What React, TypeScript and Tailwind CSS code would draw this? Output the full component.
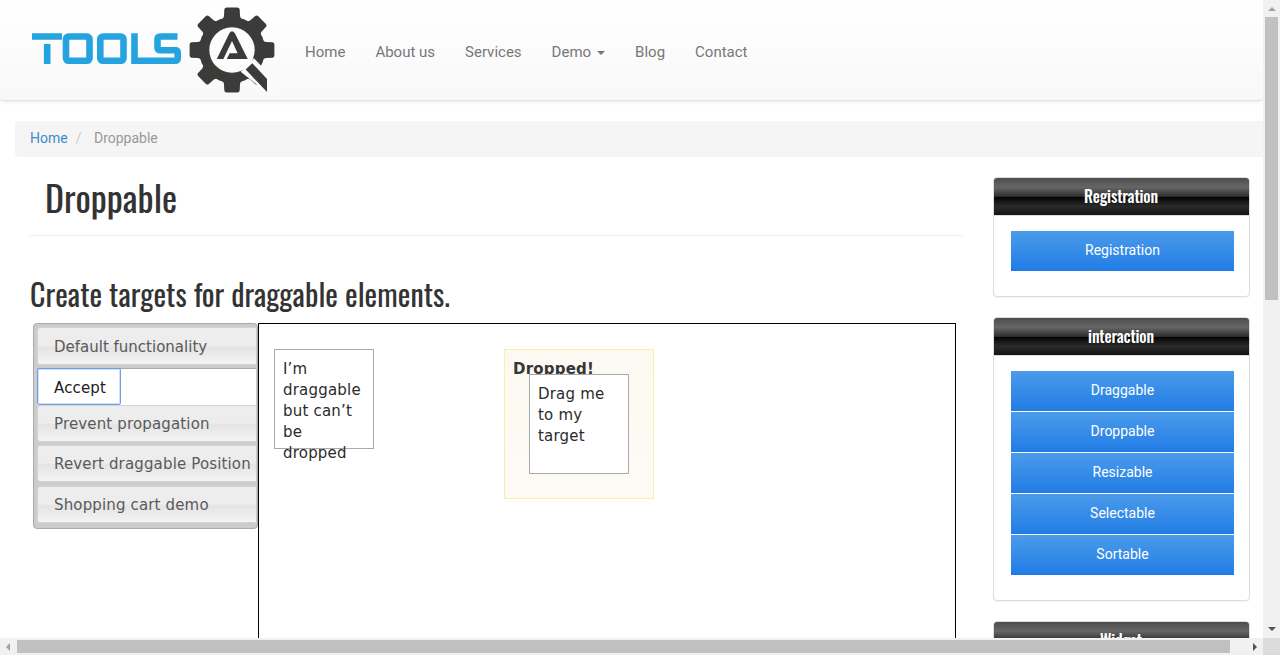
import type { ReactNode } from 'react';

const panelHead =
  "flex h-[37px] justify-center bg-[linear-gradient(to_bottom,#4c4c4c_0%,#595959_12%,#666666_25%,#474747_39%,#2c2c2c_50%,#000000_51%,#111111_60%,#2b2b2b_76%,#1c1c1c_91%,#131313_100%)] pt-2 pr-px font-['Oswald','Roboto',sans-serif] text-base leading-5 font-medium tracking-[-0.15px] text-white";

function Logo() {
  return (
    <svg width="250" height="92" viewBox="28 4 250 92" className="block shrink-0" aria-label="Tools QA">
      <g fill="none" stroke="#25a3df" strokeWidth="6.6">
        <path d="M32 36.5H62M47.2 44V64" />
        <rect x="66" y="36.5" width="23.5" height="24.3" rx="2.5" />
        <rect x="100.3" y="36.5" width="23.2" height="24.3" rx="2.5" />
        <path d="M134.5 33.2V60.8H175Q177.7 60.8 177.7 58V52.5Q177.7 50.3 175.5 50.3H160.5Q157.5 50.3 157.5 47.5V39.5Q157.5 36.5 160.5 36.5H177.5" />
      </g>
      <g fill="#3b3b3a">
        <circle cx="232" cy="50" r="33" />
        {[0, 45, 90, 135, 180, 225, 270, 315].map((a) => (
          <path
            key={a}
            d="M218 24L221.5 19.5Q223.8 18.5 224 16L224.3 9.5Q224.5 7.6 226.8 7.6H237.2Q239.5 7.6 239.7 9.5L240 16Q240.2 18.5 242.5 19.5L246 24Z"
            transform={`rotate(${a} 232 50)`}
          />
        ))}
      </g>
      <circle cx="232" cy="50" r="22.7" fill="#fcfcfc" />
      <path d="M240.7 71.7L254 58.3L280 86V103Z" fill="#fafafa" />
      <path d="M245.7 69.5L252.3 63.2L267 79V92Z" fill="#3b3b3a" />
      <path d="M216.8 59L229.2 33.5Q232 29 235 33.5L247.7 59H226.8L229.7 53.2H237.6L232 41L223.4 59Z" fill="#3b3b3a" />
    </svg>
  );
}

function Panel({ title, children }: { title: string; children?: ReactNode }) {
  return (
    <section className="mb-5 overflow-hidden rounded border border-[#ddd] bg-white shadow-[0_1px_1px_rgba(0,0,0,0.05)]">
      <h3 className={panelHead}>{title}</h3>
      <ul className="border-t border-[#ddd] pt-[15px] pr-[15px] pb-[25px] pl-[17px] text-center text-sm text-white">
        {children}
      </ul>
    </section>
  );
}

function LinkButton({ children }: { children: ReactNode }) {
  return (
    <li className="mb-px h-10 bg-linear-to-b from-[#4a9bea] to-[#207ce5] leading-[39px] last:mb-0">{children}</li>
  );
}

function Tab({ children }: { children: ReactNode }) {
  return (
    <li className="h-[37px] rounded-l-[3px] border border-r-0 border-[#d3d3d3] bg-[linear-gradient(to_bottom,#ededed_0%,#ededed_48%,#e4e4e4_54%,#f4f4f4_100%)] pl-4 leading-[37px] whitespace-nowrap">
      {children}
    </li>
  );
}

export default function App() {
  return (
    <div className="flex h-[655px] w-[1280px] flex-col overflow-hidden bg-white font-['Roboto',sans-serif] text-[#333]">
      <div className="flex h-[638px]">
        <div className="h-[638px] w-[1263px] overflow-hidden">
          <nav className="flex h-[101px] items-start rounded-b border-b border-[#e1e1e1] bg-linear-to-b from-white to-[#f8f8f8] pt-1 pl-7 shadow-[0_1px_4px_rgba(0,0,0,0.09)]">
            <Logo />
            <ul className="flex items-center gap-[30px] pt-[38px] pl-[27px] text-[15px] leading-[21px] text-[#777]">
              <li>Home</li>
              <li>About us</li>
              <li>Services</li>
              <li className="flex items-center gap-1.5">
                Demo
                <span className="border-x-4 border-t-4 border-x-transparent border-t-[#777]" />
              </li>
              <li>Blog</li>
              <li>Contact</li>
            </ul>
          </nav>
          <div className="mt-5 ml-[15px] flex h-9 rounded-l bg-[#f5f5f5] pl-[15px] text-sm leading-[35px]">
            <span className="text-[#428bca]">Home</span>
            <span className="ml-2 text-[#ccc]">/</span>
            <span className="ml-[12.5px] text-[#999]">Droppable</span>
          </div>
          <div className="flex pl-[30px]">
            <main className="w-[933px]">
              <div className="h-[79px] border-b border-[#eee] pt-5 pl-[15px]">
                <h1 className="font-['Oswald','Roboto',sans-serif] text-[36px] leading-10 font-normal whitespace-nowrap">
                  Droppable
                </h1>
              </div>
              <h2 className="h-[87px] pt-[41px] font-['Oswald','Roboto',sans-serif] text-[30px] leading-[33px] font-normal tracking-[0.07px] whitespace-nowrap">
                Create targets for draggable elements.
              </h2>
              <div className="flex pl-[3px] font-['DejaVu_Sans',sans-serif] text-[15px] tracking-[0.2px]">
                <ul className="flex h-[206px] w-[225px] flex-col rounded border border-[#aaa] bg-[#ccc] pt-[3px] pr-px pl-[3px] tracking-[0.15px] text-[#5a5a5a]">
                  <li className="h-[38px] rounded-l-[3px] border border-r-0 border-[#d3d3d3] bg-[linear-gradient(to_bottom,#ededed_0%,#ededed_48%,#e4e4e4_54%,#f4f4f4_100%)] pl-4 leading-[38px] tracking-normal whitespace-nowrap">
                    Default functionality
                  </li>
                  <li className="mt-[3px] flex h-[37px] border-t border-[#aaa] bg-white text-[#212121]">
                    <span className="-mt-px h-[37px] w-[84px] rounded-xs border border-[#6f9fee] pl-4 leading-[38px] ring-1 ring-[#cfdffa] ring-inset">
                      Accept
                    </span>
                  </li>
                  <Tab>Prevent propagation</Tab>
                  <li className="h-[3px]" />
                  <Tab>Revert draggable Position</Tab>
                  <li className="h-1" />
                  <Tab>Shopping cart demo</Tab>
                </ul>
                <div className="flex h-[400px] w-[698px] items-start border border-black pt-[25px] pl-[15px] leading-[21px] text-[#2b2b2b]">
                  <div className="h-[100px] w-[100px] border border-[#aaa] bg-white px-2 pt-[9px]">
                    I’m draggable but can’t be dropped
                  </div>
                  <div className="relative ml-[130px] h-[150px] w-[150px] border border-[#fcefa1] bg-[linear-gradient(to_bottom,#fbf9f2_0%,#fcfaf1_50%,#fdfaf5_55%,#fefaf5_100%)] px-2 pt-[9px]">
                    <b className="text-[#363636]">Dropped!</b>
                    <div className="absolute top-6 left-6 h-[100px] w-[100px] border border-[#aaa] bg-white px-2 pt-[9px]">
                      Drag me to my target
                    </div>
                  </div>
                </div>
              </div>
            </main>
            <aside className="ml-[30px] w-[257px] pt-5">
              <Panel title="Registration">
                <LinkButton>Registration</LinkButton>
              </Panel>
              <Panel title="interaction">
                <LinkButton>Draggable</LinkButton>
                <LinkButton>Droppable</LinkButton>
                <LinkButton>Resizable</LinkButton>
                <LinkButton>Selectable</LinkButton>
                <LinkButton>Sortable</LinkButton>
              </Panel>
              <Panel title="Widget" />
            </aside>
          </div>
        </div>
        <div className="flex w-[17px] flex-col items-center bg-[#f1f1f1]">
          <span className="mt-[7px] border-x-4 border-b-4 border-x-transparent border-b-[#a3a3a3]" />
          <span className="mt-1.5 h-[283px] w-[13px] bg-[#c1c1c1]" />
          <span className="mt-auto mb-[7px] border-x-4 border-t-4 border-x-transparent border-t-[#505050]" />
        </div>
      </div>
      <div className="flex h-[17px] items-center bg-[#f1f1f1]">
        <span className="ml-[6px] border-y-4 border-r-4 border-y-transparent border-r-[#a3a3a3]" />
        <span className="ml-[7px] h-[13px] w-[1213px] bg-[#c1c1c1]" />
        <span className="ml-[23px] border-y-4 border-l-4 border-y-transparent border-l-[#505050]" />
        <span className="ml-auto h-[17px] w-[17px] bg-[#dcdcdc]" />
      </div>
    </div>
  );
}
